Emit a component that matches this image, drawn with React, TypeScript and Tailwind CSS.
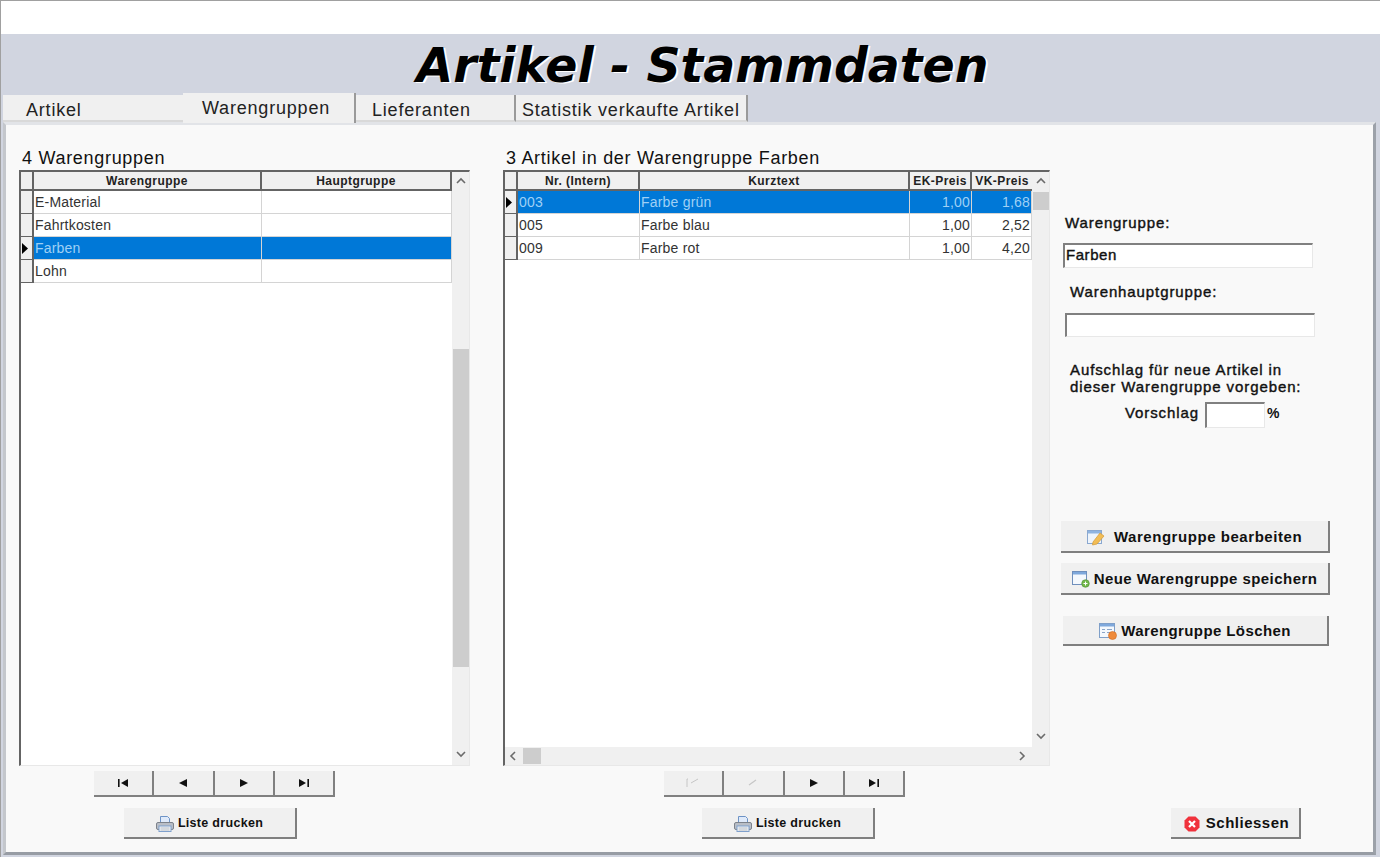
import React from "react";

const sans = "font-['Liberation_Sans',Arial,sans-serif]";

function EditIcon() {
  return (
    <svg width="18" height="17" viewBox="0 0 18 17">
      <rect x="0.5" y="1.500" width="14" height="13" fill="#eef4fb" stroke="#8aa8d0" />
      <rect x="1" y="2" width="13" height="2.500" fill="#8fb4e0" />
      <path d="M6 13 L13 4 L17 7 L10 15 L5.500 16 Z" fill="#f2bd55" stroke="#d39a35" strokeWidth="0.7" />
    </svg>
  );
}
function NewIcon() {
  return (
    <svg width="18" height="17" viewBox="0 0 18 17">
      <rect x="0.500" y="0.500" width="14" height="13" fill="#f4f8fd" stroke="#6f8fbc" />
      <rect x="1" y="1" width="13" height="2.500" fill="#7ea8dc" />
      <circle cx="13.500" cy="12.500" r="3.800" fill="#72b74a" stroke="#4d8f30" strokeWidth="0.6" />
      <path d="M13.500 10.500v4M11.500 12.500h4" stroke="#fff" strokeWidth="1" />
    </svg>
  );
}
function DeleteIcon() {
  return (
    <svg width="18" height="17" viewBox="0 0 18 17">
      <rect x="0.500" y="0.500" width="15" height="14" fill="#f4f8fd" stroke="#7f9fc8" />
      <rect x="1" y="1" width="14" height="2.500" fill="#7ea8dc" />
      <path d="M3 6.500h3M8 6.500h5M3 9.500h3M8 9.500h3" stroke="#8aa5c8" strokeWidth="1" />
      <circle cx="13.500" cy="12.500" r="4" fill="#ef8a3a" stroke="#cf6a20" strokeWidth="0.6" />
    </svg>
  );
}
function PrinterIcon() {
  return (
    <svg width="18" height="18" viewBox="0 0 18 18">
      <path d="M4.500 1.500h7l2 2v5h-9z" fill="#dfeafa" stroke="#6d93c6" />
      <rect x="0.500" y="7.500" width="17" height="7" rx="1.500" fill="#b9bec6" stroke="#7c828b" />
      <rect x="3" y="11" width="12" height="5.500" fill="#f1f3f6" stroke="#7fa0cc" />
      <path d="M4.500 13h9M4.500 15h9" stroke="#a9b0ba" strokeWidth="0.8" />
    </svg>
  );
}
function CloseIcon() {
  return (
    <svg width="16" height="16" viewBox="0 0 16 16">
      <path d="M4.500 0.500h7l4 4v7l-4 4h-7l-4-4v-7z" fill="#f0323c" />
      <path d="M5 5l6 6M11 5l-6 6" stroke="#fff" strokeWidth="2.200" />
    </svg>
  );
}

function Chevron({ dir }: { dir: "up" | "down" | "left" | "right" }) {
  const d = {
    up: "M1 6l4-4 4 4",
    down: "M1 2l4 4 4-4",
    left: "M6 1L2 5l4 4",
    right: "M2 1l4 4-4 4",
  }[dir];
  return (
    <svg width="10" height="10" viewBox="0 0 10 10" fill="none">
      <path d={d} stroke="#6b6b6b" strokeWidth="1.6" />
    </svg>
  );
}

function Nav({ kind, off }: { kind: string; off?: boolean }) {
  const c = "#111";
  return (
    <div className="w-[60.25px] h-[26px] bg-[#f0f0f0] border-r-2 border-b-2 border-[#808080] flex items-center justify-center">
      {off ? (
        <svg width="16" height="12" viewBox="0 0 16 12" fill="none">
          {kind === "first" ? (
            <path d="M2 10V2h1M6 6l7-4" stroke="#c6c6c6" strokeWidth="1" />
          ) : (
            <path d="M4 8l7-5" stroke="#c6c6c6" strokeWidth="1.200" />
          )}
        </svg>
      ) : (
        <svg width="12" height="10" viewBox="0 0 12 10">
          {kind === "first" && <path d="M1 1h1.600v8H1zM11 1v8L4 5z" fill={c} />}
          {kind === "prev" && <path d="M10 1v8L2 5z" fill={c} />}
          {kind === "next" && <path d="M2 1v8l8-4z" fill={c} />}
          {kind === "last" && <path d="M1 1v8l7-4zM9.400 1H11v8H9.400z" fill={c} />}
        </svg>
      )}
    </div>
  );
}

function Navigator({ off }: { off?: boolean }) {
  return (
    <div className="flex">
      <Nav kind="first" off={off} />
      <Nav kind="prev" off={off} />
      <Nav kind="next" />
      <Nav kind="last" />
    </div>
  );
}

function Button({
  icon,
  label,
  className,
}: {
  icon: React.ReactNode;
  label: string;
  className: string;
}) {
  return (
    <div
      className={`bg-[#f0f0f0] border-r-2 border-b-2 border-[#7f7f7f] pt-[2px] flex items-center justify-center font-bold text-[#111] ${className}`}
    >
      {icon}
      <span>{label}</span>
    </div>
  );
}

function Head({ label, className }: { label: string; className: string }) {
  return (
    <div
      className={`h-[19px] shrink-0 bg-[#f0f0f0] border-r-2 border-b-2 border-[#646464] flex items-center justify-center text-[12px] tracking-[0.45px] font-bold text-[#222] ${className}`}
    >
      {label}
    </div>
  );
}

function Indicator({ active }: { active?: boolean }) {
  return (
    <div className="w-[13px] h-[23px] shrink-0 bg-[#f0f0f0] border-r-2 border-b border-[#646464] flex items-center justify-start">
      {active && (
        <svg width="7" height="11" viewBox="0 0 7 11">
          <path d="M1 0v11l6-5.500z" fill="#000" />
        </svg>
      )}
    </div>
  );
}

function Cell({
  text,
  className,
  active,
  right,
}: {
  text: string;
  className: string;
  active?: boolean;
  right?: boolean;
}) {
  return (
    <div
      className={`h-[23px] shrink-0 flex items-center border-r border-b border-[#d4d4d4] text-[14px] tracking-[0.2px] px-[1px] ${
        right ? "justify-end" : ""
      } ${active ? "bg-[#0078d7] text-[#9fd0f5]" : "bg-white text-[#333]"} ${className}`}
    >
      {text}
    </div>
  );
}

function Row({
  cells,
  active,
}: {
  cells: { t: string; c: string; r?: boolean }[];
  active?: boolean;
}) {
  return (
    <div className="flex">
      <Indicator active={active} />
      {cells.map((x, i) => (
        <Cell key={i} text={x.t} className={x.c} active={active} right={x.r} />
      ))}
    </div>
  );
}

function Tab({
  label,
  className,
  active,
}: {
  label: string;
  className: string;
  active?: boolean;
}) {
  return (
    <div
      className={`bg-[#f0f0f0] text-[18px] tracking-[0.8px] text-[#222] flex items-center ${
        active ? "h-[30px] border-r-2 border-[#9a9a9a]" : "h-[27px] pt-[5px] border-b-2 border-[#d9d9d9]"
      } ${className}`}
    >
      {label}
    </div>
  );
}

const label = "text-[15px] tracking-[0.9px] text-[#111] [-webkit-text-stroke:0.4px_#111]";
const field = "bg-white border-t-2 border-l-2 border-r border-b border-t-[#808080] border-l-[#808080] border-r-[#e8e8e8] border-b-[#e8e8e8]";

export default function App() {
  return (
    <div className={`w-[1380px] h-[857px] overflow-hidden bg-white border-t border-l border-[#a0a0a0] flex flex-col ${sans}`}>
      <div className="h-[33px] shrink-0" />
      <div className="flex-1 min-h-0 bg-[#d1d5e0] flex flex-col">
        <div className="h-[61px] shrink-0 flex items-center justify-center pl-[24px] pt-[2px]">
          <h1 className="font-['DejaVu_Sans',sans-serif] font-bold italic text-[47.400px] leading-none text-black [text-shadow:2px_1px_0_#fff]">
            Artikel - Stammdaten
          </h1>
        </div>
        <div className="flex items-end h-[27px] shrink-0 pl-[2px] relative z-10">
          <Tab label="Artikel" className="w-[180px] pl-[23px]" />
          <Tab label="Warengruppen" className="w-[173px] pl-[19px] mb-[-1px]" active />
          <Tab label="Lieferanten" className="w-[160px] pl-[16px] border-r-2 !border-r-[#9a9a9a]" />
          <Tab label="Statistik verkaufte Artikel" className="w-[232px] pl-[6px] border-r-2 !border-r-[#9a9a9a]" />
        </div>
        <div className="flex-1 min-h-0 ml-[2px] mr-[4px] mb-[2px] bg-[#f9f9f9] border-t-[3px] border-l-[3px] border-r-[3px] border-b-[3px] border-t-[#e2e4e8] border-l-[#c4c7cc] border-r-[#9ca1a9] border-b-[#979ca4] flex pl-[13px]">
          {/* left */}
          <div className="w-[451px] shrink-0 flex flex-col pt-[24px]">
            <div className="h-[21px] pl-[3px] text-[18px] tracking-[0.7px] leading-[19px] text-[#111]">4 Warengruppen</div>
            <div className="h-[596px] flex border-t-2 border-l-2 border-r border-b border-t-[#646464] border-l-[#646464] border-r-[#e8e8e8] border-b-[#e8e8e8] bg-white">
              <div className="flex-1 min-w-0 flex flex-col">
                <div className="flex">
                  <Head label="" className="w-[13px]" />
                  <Head label="Warengruppe" className="w-[228px]" />
                  <Head label="Hauptgruppe" className="w-[190px]" />
                </div>
                <Row cells={[{ t: "E-Material", c: "w-[228px]" }, { t: "", c: "w-[190px]" }]} />
                <Row cells={[{ t: "Fahrtkosten", c: "w-[228px]" }, { t: "", c: "w-[190px]" }]} />
                <Row active cells={[{ t: "Farben", c: "w-[228px]" }, { t: "", c: "w-[190px]" }]} />
                <Row cells={[{ t: "Lohn", c: "w-[228px]" }, { t: "", c: "w-[190px]" }]} />
              </div>
              <div className="w-[17px] shrink-0 bg-[#f0f0f0] flex flex-col items-center">
                <div className="h-[20px] flex items-center justify-center"><Chevron dir="up" /></div>
                <div className="h-[157px]" />
                <div className="w-[16px] h-[318px] bg-[#cdcdcd]" />
                <div className="flex-1" />
                <div className="h-[20px] flex items-center justify-center"><Chevron dir="down" /></div>
              </div>
            </div>
            <div className="mt-[5px] ml-[75px]"><Navigator /></div>
            <Button
              icon={<span className="mr-[4px] flex"><PrinterIcon /></span>}
              label="Liste drucken"
              className="mt-[11px] ml-[105px] w-[173px] h-[31px] text-[12.500px] tracking-[0.3px]"
            />
          </div>
          {/* middle */}
          <div className="w-[547px] ml-[33px] shrink-0 flex flex-col pt-[24px]">
            <div className="h-[21px] pl-[3px] text-[18px] tracking-[0.7px] leading-[19px] text-[#111]">3 Artikel in der Warengruppe Farben</div>
            <div className="h-[596px] flex flex-col border-t-2 border-l-2 border-r border-b border-t-[#646464] border-l-[#646464] border-r-[#e8e8e8] border-b-[#e8e8e8] bg-white">
              <div className="flex-1 min-h-0 flex">
                <div className="flex-1 min-w-0 flex flex-col">
                  <div className="flex">
                    <Head label="" className="w-[13px]" />
                    <Head label="Nr. (Intern)" className="w-[122px]" />
                    <Head label="Kurztext" className="w-[270px]" />
                    <Head label="EK-Preis" className="w-[62px]" />
                    <Head label="VK-Preis" className="w-[60px] !border-r-0" />
                  </div>
                  <Row active cells={[{ t: "003", c: "w-[122px]" }, { t: "Farbe grün", c: "w-[270px]" }, { t: "1,00", c: "w-[62px]", r: true }, { t: "1,68", c: "w-[60px]", r: true }]} />
                  <Row cells={[{ t: "005", c: "w-[122px]" }, { t: "Farbe blau", c: "w-[270px]" }, { t: "1,00", c: "w-[62px]", r: true }, { t: "2,52", c: "w-[60px]", r: true }]} />
                  <Row cells={[{ t: "009", c: "w-[122px]" }, { t: "Farbe rot", c: "w-[270px]" }, { t: "1,00", c: "w-[62px]", r: true }, { t: "4,20", c: "w-[60px]", r: true }]} />
                </div>
                <div className="w-[17px] shrink-0 bg-[#f0f0f0] flex flex-col items-center">
                  <div className="h-[20px] flex items-center justify-center"><Chevron dir="up" /></div>
                  <div className="w-[16px] h-[18px] bg-[#cdcdcd]" />
                  <div className="flex-1" />
                  <div className="h-[20px] flex items-center justify-center"><Chevron dir="down" /></div>
                </div>
              </div>
              <div className="h-[18px] shrink-0 bg-[#f0f0f0] flex items-center">
                <div className="w-[18px] flex justify-center"><Chevron dir="left" /></div>
                <div className="w-[18px] h-[16px] bg-[#cdcdcd]" />
                <div className="flex-1" />
                <div className="w-[20px] flex justify-center mr-[16px]"><Chevron dir="right" /></div>
              </div>
            </div>
            <div className="mt-[5px] ml-[161px]"><Navigator off /></div>
            <Button
              icon={<span className="mr-[4px] flex"><PrinterIcon /></span>}
              label="Liste drucken"
              className="mt-[11px] ml-[199px] w-[173px] h-[31px] text-[12.500px] tracking-[0.3px]"
            />
          </div>
          {/* right */}
          <div className="w-[270px] ml-[11px] shrink-0 flex flex-col">
            <div className={`mt-[88px] ml-[4px] leading-[20px] ${label}`}>Warengruppe:</div>
            <div className={`mt-[10px] ml-[2px] w-[250px] h-[25px] pl-[1px] pb-[1px] flex items-center ${field} text-[15px] tracking-[0.55px] text-[#111] [-webkit-text-stroke:0.4px_#111]`}>Farben</div>
            <div className={`mt-[14px] ml-[9px] leading-[20px] ${label}`}>Warenhauptgruppe:</div>
            <div className={`mt-[11px] ml-[4px] w-[250px] h-[24px] ${field}`} />
            <div className={`mt-[24px] ml-[9px] leading-[17px] ${label}`}>
              Aufschlag für neue Artikel in
              <br />
              dieser Warengruppe vorgeben:
            </div>
            <div className="mt-[7px] ml-[64px] flex items-start">
              <span className={`mt-[1px] leading-[20px] ${label}`}>Vorschlag</span>
              <div className={`ml-[6px] w-[60px] h-[26px] ${field}`} />
              <span className="ml-[2px] mt-[1px] text-[14px] leading-[20px] font-bold text-[#111]">%</span>
            </div>
            <Button
              icon={<span className="mr-[9px] flex"><EditIcon /></span>}
              label="Warengruppe bearbeiten"
              className="mt-[93px] w-[269px] h-[32px] text-[15px] tracking-[0.55px]"
            />
            <Button
              icon={<span className="mr-[4px] flex"><NewIcon /></span>}
              label="Neue Warengruppe speichern"
              className="mt-[10px] w-[269px] h-[32px] text-[15px] tracking-[0.45px]"
            />
            <Button
              icon={<span className="mr-[4px] flex"><DeleteIcon /></span>}
              label="Warengruppe Löschen"
              className="mt-[21px] ml-[2px] w-[266px] h-[30px] text-[15px] tracking-[0.4px]"
            />
            <Button
              icon={<span className="mr-[6px] flex"><CloseIcon /></span>}
              label="Schliessen"
              className="mt-auto mb-[13px] ml-[110px] w-[130px] h-[31px] pl-[3px] text-[15px] tracking-[0.5px]"
            />
          </div>
        </div>
      </div>
    </div>
  );
}
